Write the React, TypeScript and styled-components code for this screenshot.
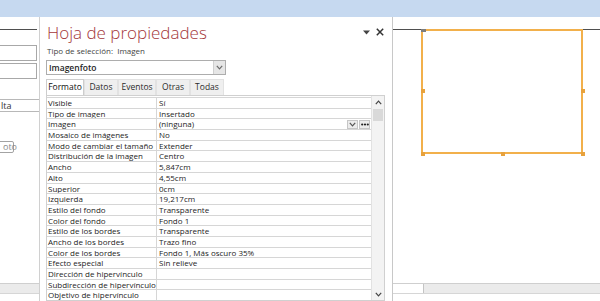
import styled, { createGlobalStyle } from "styled-components";

const GlobalStyle = createGlobalStyle`
  html, body {
    margin: 0;
    padding: 0;
    background: #ffffff;
  }
  body {
    font-family: "Open Sans", "Noto Sans", sans-serif;
    color: #1c1c1c;
  }
`;

const properties: [string, string][] = [
  ["Visible", "Sí"],
  ["Tipo de imagen", "Insertado"],
  ["Imagen", "(ninguna)"],
  ["Mosaico de imágenes", "No"],
  ["Modo de cambiar el tamaño", "Extender"],
  ["Distribución de la imagen", "Centro"],
  ["Ancho", "5,847cm"],
  ["Alto", "4,55cm"],
  ["Superior", "0cm"],
  ["Izquierda", "19,217cm"],
  ["Estilo del fondo", "Transparente"],
  ["Color del fondo", "Fondo 1"],
  ["Estilo de los bordes", "Transparente"],
  ["Ancho de los bordes", "Trazo fino"],
  ["Color de los bordes", "Fondo 1, Más oscuro 35%"],
  ["Efecto especial", "Sin relieve"],
  ["Dirección de hipervínculo", ""],
  ["Subdirección de hipervínculo", ""],
  ["Objetivo de hipervínculo", ""],
];

const tabs = [
  { name: "Formato", width: 38 },
  { name: "Datos", width: 34 },
  { name: "Eventos", width: 38 },
  { name: "Otras", width: 34 },
  { name: "Todas", width: 34 },
];

const Chevron = ({ up = false, color = "#555" }: { up?: boolean; color?: string }) => (
  <svg width="7" height="5" viewBox="0 0 7 5">
    <path
      d={up ? "M0.8 4.2 L3.5 1.2 L6.2 4.2" : "M0.8 0.8 L3.5 3.8 L6.2 0.8"}
      fill="none"
      stroke={color}
      strokeWidth="1.2"
    />
  </svg>
);

const App = () => {
  return (
    <>
      <GlobalStyle />
      <Page>
        <TitleBar />
        <Workspace>
          <FormStrip>
            <SectionLine />
            <FieldBox $top={15} />
            <FieldBox $top={2} />
            <CaptionBox>lta</CaptionBox>
            <ButtonBox>oto</ButtonBox>
            <HScroll>
              <ScrollTrack />
            </HScroll>
          </FormStrip>

          <Sheet>
            <SheetHeader>
              <SheetTitle>Hoja de propiedades</SheetTitle>
              <HeaderControls>
                <svg width="7" height="5" viewBox="0 0 7 5">
                  <path d="M0 0.5 H7 L3.5 4.5 Z" fill="#444" />
                </svg>
                <svg width="8" height="8" viewBox="0 0 8 8">
                  <path d="M0.8 0.8 L7.2 7.2 M7.2 0.8 L0.8 7.2" stroke="#333" strokeWidth="1.5" />
                </svg>
              </HeaderControls>
            </SheetHeader>
            <SelectionType>Tipo de selección:  Imagen</SelectionType>

            <Combo>
              <ComboText>Imagenfoto</ComboText>
              <ComboButton>
                <Chevron color="#6b6b6b" />
              </ComboButton>
            </Combo>

            <TabStrip>
              {tabs.map(t => (
                <Tab key={t.name} $active={t.name === "Formato"} $w={t.width}>
                  {t.name}
                </Tab>
              ))}
            </TabStrip>

            <GridFrame>
              <Rows>
                {properties.map(([label, value]) => (
                  <Row key={label}>
                    <Label>{label}</Label>
                    <Value>
                      <span>{value}</span>
                      {label === "Imagen" && (
                        <CellButtons>
                          <CellButton>
                            <Chevron color="#555" />
                          </CellButton>
                          <CellButton>
                            <svg width="8" height="3" viewBox="0 0 8 3">
                              <circle cx="1.2" cy="1.5" r="1.1" fill="#222" />
                              <circle cx="4" cy="1.5" r="1.1" fill="#222" />
                              <circle cx="6.8" cy="1.5" r="1.1" fill="#222" />
                            </svg>
                          </CellButton>
                        </CellButtons>
                      )}
                    </Value>
                  </Row>
                ))}
              </Rows>
              <VScroll>
                <ArrowCell>
                  <Chevron up color="#444" />
                </ArrowCell>
                <Thumb />
                <ArrowCell $bottom>
                  <Chevron color="#444" />
                </ArrowCell>
              </VScroll>
            </GridFrame>
          </Sheet>

          <Canvas>
            <SectionLine $full />
            <ImageControl>
              <Handle $x={-2} $y={-2} $w={5} $h={3} $dark />
              <Handle $x={-2} $y={58} />
              <Handle $x={158} $y={58} />
              <Handle $x={-2} $y={121} />
              <Handle $x={78} $y={121} />
              <Handle $x={158} $y={121} />
            </ImageControl>
            <HScroll>
              <ScrollBox />
              <ScrollTrack />
            </HScroll>
          </Canvas>
        </Workspace>
      </Page>
    </>
  );
};

const Page = styled.div`
  width: 600px;
  height: 301px;
  overflow: hidden;
  display: flex;
  flex-direction: column;
  background: #ffffff;
`;

const TitleBar = styled.div`
  flex: none;
  height: 17px;
  background: #c6d9f0;
`;

const Workspace = styled.div`
  flex: 1;
  min-height: 0;
  display: flex;
`;

const FormStrip = styled.div`
  flex: none;
  width: 39px;
  overflow: hidden;
  display: flex;
  flex-direction: column;
  font-size: 9px;
`;

const SectionLine = styled.div<{ $full?: boolean }>`
  flex: none;
  width: ${p => (p.$full ? "100%" : "37px")};
  height: 12px;
  border-bottom: 1px solid #4f4f4f;
`;

const FieldBox = styled.div<{ $top: number }>`
  flex: none;
  margin: ${p => p.$top}px 0 0 -1px;
  width: 38px;
  height: 16px;
  box-sizing: border-box;
  border: 1px solid #a8a8a8;
`;

const CaptionBox = styled.div`
  flex: none;
  margin-top: 20px;
  width: 60px;
  height: 13px;
  box-sizing: border-box;
  border-top: 1px solid #b8b8b8;
  border-bottom: 1px solid #b8b8b8;
  padding-left: 1px;
  line-height: 11px;
  color: #333;
`;

const ButtonBox = styled.div`
  flex: none;
  margin: 29px 0 0 -3px;
  width: 17px;
  height: 12px;
  box-sizing: border-box;
  border: 1px solid #a3a3a3;
  border-radius: 2px;
  padding-left: 5px;
  line-height: 10px;
  color: #8a8a8a;
`;

const HScroll = styled.div`
  flex: none;
  margin-top: auto;
  margin-bottom: 7px;
  height: 11px;
  display: flex;
  border-top: 1px solid #cfcfcf;
  border-bottom: 1px solid #d6d6d6;
  box-sizing: border-box;
`;

const ScrollTrack = styled.div`
  flex: 1;
  background: #ebebeb;
`;

const ScrollBox = styled.div`
  flex: none;
  width: 30px;
  background: #ffffff;
  border-right: 1px solid #c4c4c4;
`;

const Sheet = styled.section`
  flex: none;
  width: 354px;
  box-sizing: border-box;
  background: #ffffff;
  border-left: 1px solid #d0d0d0;
  border-right: 1px solid #c8c8c8;
  padding: 6px 0 0 6px;
  display: flex;
  flex-direction: column;
  overflow: hidden;
`;

const SheetHeader = styled.div`
  display: flex;
  justify-content: space-between;
  align-items: flex-start;
  padding-right: 8px;
`;

const SheetTitle = styled.h1`
  margin: 0 0 0 1px;
  font-size: 17px;
  line-height: 20px;
  font-weight: 300;
  color: #a4373a;
`;

const HeaderControls = styled.div`
  display: flex;
  align-items: center;
  gap: 6px;
  margin-top: 5px;
`;

const SelectionType = styled.div`
  margin: 3px 0 0 1px;
  font-size: 8px;
  line-height: 10px;
  color: #444;
  white-space: pre;
`;

const Combo = styled.div`
  margin-top: 4px;
  width: 180px;
  height: 15px;
  box-sizing: border-box;
  border: 1px solid #adadad;
  display: flex;
`;

const ComboText = styled.div`
  flex: 1;
  padding-left: 2px;
  font-size: 8.5px;
  line-height: 13px;
  font-weight: 600;
  color: #262626;
`;

const ComboButton = styled.div`
  flex: none;
  width: 11px;
  background: #e6e6e6;
  border-left: 1px solid #cfcfcf;
  display: flex;
  align-items: center;
  justify-content: center;
`;

const TabStrip = styled.div`
  margin-top: 4px;
  display: flex;
  height: 16px;
`;

const Tab = styled.div<{ $active: boolean; $w: number }>`
  width: ${p => p.$w}px;
  box-sizing: border-box;
  text-align: center;
  font-size: 8.5px;
  line-height: 14px;
  color: ${p => (p.$active ? "#111" : "#2b2b2b")};
  background: ${p => (p.$active ? "#ffffff" : "#efefef")};
  border: 1px solid ${p => (p.$active ? "#cdcdcd" : "#e2e2e2")};
  border-bottom: none;
`;

const GridFrame = styled.div`
  flex: 1;
  min-height: 0;
  width: 339px;
  box-sizing: border-box;
  border: 1px solid #d0d0d0;
  display: flex;
`;

const Rows = styled.div`
  flex: 1;
  padding-top: 1px;
  overflow: hidden;
`;

const Row = styled.div`
  display: grid;
  grid-template-columns: 110px 1fr;
  height: 10.7px;
  box-sizing: border-box;
  border-top: 1px solid #d6d6d6;
  font-size: 8px;
  line-height: 9.7px;
`;

const Label = styled.div`
  padding-left: 1px;
  border-right: 1px solid #d6d6d6;
  white-space: nowrap;
  overflow: hidden;
`;

const Value = styled.div`
  padding-left: 2px;
  display: flex;
  align-items: center;
  white-space: nowrap;
`;

const CellButtons = styled.div`
  margin-left: auto;
  display: flex;
  gap: 1px;
  padding-right: 1px;
`;

const CellButton = styled.div`
  width: 11px;
  height: 9px;
  box-sizing: border-box;
  background: #ececec;
  border: 1px solid #c6c6c6;
  display: flex;
  align-items: center;
  justify-content: center;
`;

const VScroll = styled.div`
  flex: none;
  width: 12px;
  background: #f3f3f3;
  border-left: 1px solid #e2e2e2;
  display: flex;
  flex-direction: column;
  align-items: center;
`;

const ArrowCell = styled.div<{ $bottom?: boolean }>`
  height: 12px;
  display: flex;
  align-items: center;
  justify-content: center;
  margin-top: ${p => (p.$bottom ? "auto" : "0")};
`;

const Thumb = styled.div`
  width: 10px;
  height: 12px;
  margin-top: 1px;
  background: #d9d9d9;
`;

const Canvas = styled.div`
  flex: 1;
  position: relative;
  display: flex;
  flex-direction: column;
`;

const ImageControl = styled.div`
  position: absolute;
  left: 28px;
  top: 12px;
  width: 162px;
  height: 125px;
  box-sizing: border-box;
  border: 2px solid #f2b04b;
`;

const Handle = styled.div<{ $x: number; $y: number; $w?: number; $h?: number; $dark?: boolean }>`
  position: absolute;
  left: ${p => p.$x}px;
  top: ${p => p.$y}px;
  width: ${p => p.$w ?? 4}px;
  height: ${p => p.$h ?? 4}px;
  background: ${p => (p.$dark ? "#7d7d7d" : "#e8a23c")};
`;

export default App;
